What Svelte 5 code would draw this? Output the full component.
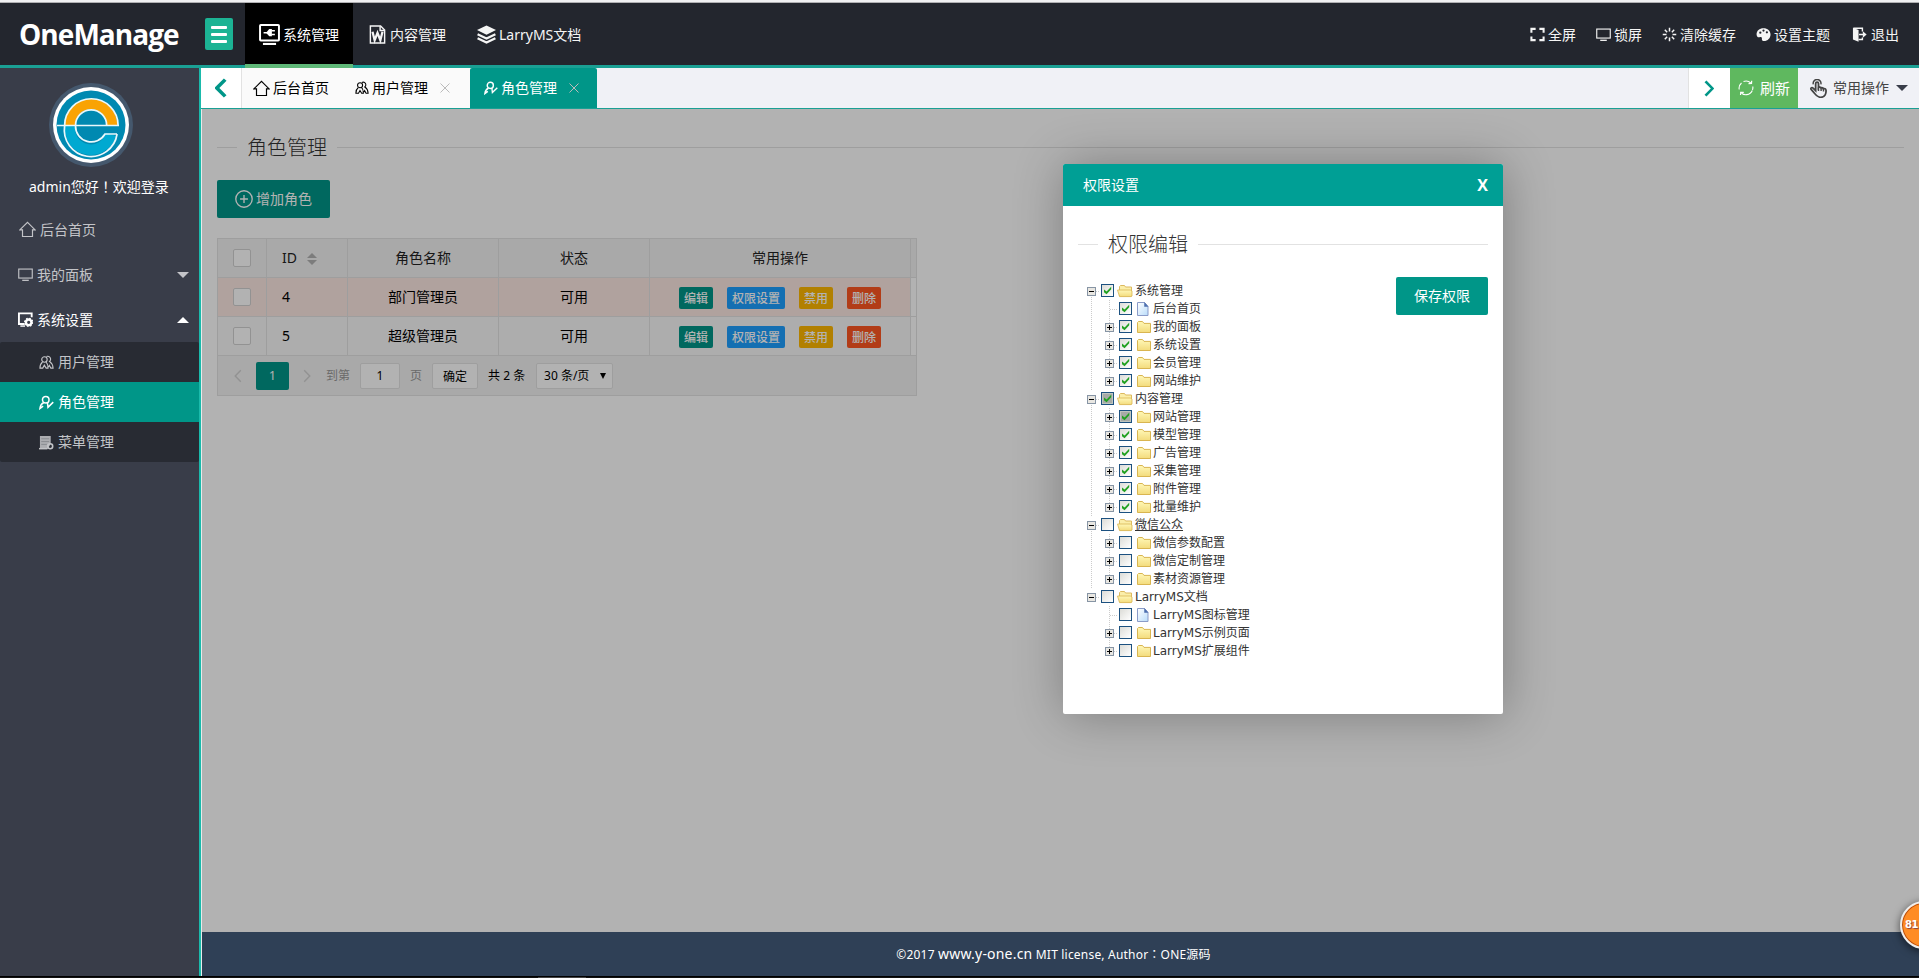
<script>
  const topNav = [
    { icon: 'plug', label: '系统管理', active: true },
    { icon: 'word', label: '内容管理' },
    { icon: 'layers', label: 'LarryMS文档' }
  ];
  const tools = [
    { icon: 'full', label: '全屏' },
    { icon: 'monitor', label: '锁屏' },
    { icon: 'burst', label: '清除缓存' },
    { icon: 'palette', label: '设置主题' },
    { icon: 'exit', label: '退出' }
  ];
  const subMenu = [
    { icon: 'users', label: '用户管理' },
    { icon: 'role', label: '角色管理', active: true },
    { icon: 'menu', label: '菜单管理' }
  ];
  const rows = [
    { id: 4, name: '部门管理员', state: '可用', hover: true },
    { id: 5, name: '超级管理员', state: '可用' }
  ];
  const tree = [
    { label: '系统管理', check: 'on', children: [
      { label: '后台首页', check: 'on', leaf: true },
      { label: '我的面板', check: 'on' },
      { label: '系统设置', check: 'on' },
      { label: '会员管理', check: 'on' },
      { label: '网站维护', check: 'on' }
    ] },
    { label: '内容管理', check: 'part', children: [
      { label: '网站管理', check: 'part' },
      { label: '模型管理', check: 'on' },
      { label: '广告管理', check: 'on' },
      { label: '采集管理', check: 'on' },
      { label: '附件管理', check: 'on' },
      { label: '批量维护', check: 'on' }
    ] },
    { label: '微信公众', check: 'off', underline: true, children: [
      { label: '微信参数配置', check: 'off' },
      { label: '微信定制管理', check: 'off' },
      { label: '素材资源管理', check: 'off' }
    ] },
    { label: 'LarryMS文档', check: 'off', children: [
      { label: 'LarryMS图标管理', check: 'off', leaf: true },
      { label: 'LarryMS示例页面', check: 'off' },
      { label: 'LarryMS扩展组件', check: 'off' }
    ] }
  ];
</script>

{#snippet icon(name, size = 16)}
  <svg class="icon" width={size} height={size} viewBox="0 0 16 16" fill="none" stroke="currentColor" stroke-width="1.2">
    {#if name === 'plug'}
      <rect x=".8" y=".8" width="14.4" height="11.8" rx=".6" stroke-width="1.5" />
      <path d="M3 15.2h10" stroke-width="1.6" />
      <path d="M3.500 6.600h3M9.500 5.200h2.600M9.500 8h2.600" />
      <path d="M9.800 3.800v5.600H7.800L5.400 6.600l2.400-2.800z" fill="currentColor" stroke="none" />
    {:else if name === 'word'}
      <path d="M2 .8h8.600L14 4.200v11H2z" />
      <path d="M10.200 1v3.600H14" />
      <path d="M3.800 5.600l1.800 7.200L8 6.600l2.400 6.200 1.800-7.200" stroke-width="1.900" />
    {:else if name === 'layers'}
      <path d="M8 .4l8 3.900-8 3.900-8-3.900z" fill="currentColor" stroke="none" />
      <path d="M.5 7.800L8 11.400l7.500-3.600M.5 11.200L8 14.800l7.500-3.600" stroke-width="1.900" />
    {:else if name === 'full'}
      <path d="M1.500 6V2H6M10 2h4.500V6M14.500 10v4H10M6 14H1.500v-4" stroke-width="2.200" />
    {:else if name === 'monitor'}
      <rect x=".8" y="2.200" width="14.400" height="9.600" />
      <path d="M4.500 14.200h7" stroke-width="1.400" />
    {:else if name === 'burst'}
      <path d="M8 .8v4M8 11.200v4M.8 8h4M11.200 8h4M3 3l2.500 2.500M10.500 10.500L13 13M13 3l-2.500 2.500M5.500 10.500L3 13" stroke-width="1.600" />
    {:else if name === 'palette'}
      <path fill-rule="evenodd" d="M8 1.200C3.600 1.200.6 4 .6 7.600c0 2.600 1.500 3.600 3.200 3.200 1.700-.4 2.700.1 2.500 1.900-.2 1.600.8 2.200 2.200 2.200 4 0 7-3.200 7-7C15.500 4 12.400 1.200 8 1.200zM3.400 6a1.200 1.200 0 1 0 2.400 0 1.200 1.200 0 0 0-2.400 0zM6.800 3.800a1.200 1.200 0 1 0 2.400 0 1.200 1.200 0 0 0-2.400 0zM10.400 5.600a1.200 1.200 0 1 0 2.400 0 1.200 1.200 0 0 0-2.400 0z" fill="currentColor" stroke="none" />
    {:else if name === 'exit'}
      <path d="M1 .8l6 2.400v12.400l-6-2.200z" fill="currentColor" stroke="none" />
      <path d="M1.500 1.300h9.600v3.500M11.100 11.200v2.200H7M7.500 8h5" stroke-width="1.500" />
      <path d="M11.500 4.600L15.600 8l-4.100 3.400z" fill="currentColor" stroke="none" />
    {:else if name === 'home'}
      <path d="M.8 8.400L8 1.300l7.200 7.100H12.700v6.200H3.300V8.400z" stroke-width="1.100" />
    {:else if name === 'users'}
      <circle cx="5.800" cy="4.800" r="2.900" /><path d="M8 1.600a3 3 0 1 1 2.600 5.600M3.800 7.400C1.800 9 1 11 1 14h3l1.700-3.200L7.600 14h2c0-3-.4-5-2.200-6.600M11.600 7.200c2.200 1.400 3.200 3.600 3.400 6.800h-2.400l-1.600-3-1 1.800" />
    {:else if name === 'role'}
      <circle cx="7.200" cy="5" r="3.500" stroke-width="1.600" />
      <path d="M5.200 8C2.600 9.300 1.400 11 1 14.400l3.400-2.600M9 8l.6 5.200L15.200 7.600" stroke-width="1.600" />
    {:else if name === 'setting'}
      <path d="M7 12.800H1V1.500h13.600v4" stroke-width="2" />
      <path d="M2.500 15h5" stroke-width="1.500" />
      <circle cx="11.400" cy="11" r="3" stroke-width="2.600" />
      <circle cx="11.400" cy="11" r="4.300" stroke-width="1.400" stroke-dasharray="1.700 1.680" />
    {:else if name === 'menu'}
      <path d="M1 1h11.500v8.500L9 15H1z" fill="currentColor" stroke="none" opacity=".85" />
      <path d="M2.400 4h8.400M2.400 7h8.400M2.400 10h6" stroke="#777a80" stroke-width=".7" />
      <circle cx="12" cy="12" r="2.600" stroke-width="1.700" />
      <path d="M0 14.600h9" stroke-width="1.600" />
    {:else if name === 'add'}
      <circle cx="8" cy="8" r="7.300" /><path d="M4.500 8h7M8 4.500v7" />
    {:else if name === 'refresh'}
      <path d="M14.300 10.500A7 7 0 0 1 2.500 12.200M1.200 9.500A7 7 0 0 1 3.500 3M5.500 1.600A7 7 0 0 1 12.800 3M14.800 6.500a7 7 0 0 1-.3 3.400" stroke-width="1.100" />
      <path d="M10.500 3.600l3-.2.200-2.600M5.800 12.300l-3 .1-.3 2.600" />
    {:else if name === 'hand'}
      <path d="M5.600 9.800V3.900c0-1.700 2.400-1.700 2.400 0v3.300c.5-.7 1.900-.5 2.200.3.600-.4 1.700-.1 1.900.7 1-.4 2 .1 2.200 1.200.3 2.600-.6 6-4.500 6-3 0-4-1.800-6-4.400L1.700 8.600c-.5-1.200.9-1.800 1.700-1z" stroke-width="1.500" />
      <path d="M3.600 4.500a3.300 3.300 0 1 1 6.400 0M8 7v3M10.200 7.800v2.400M12.200 8.500v2" stroke-width="1.200" />
    {/if}
  </svg>
{/snippet}

{#snippet chevron(right, w, h, sw)}
  <svg width={w} height={h} viewBox="0 0 10 18" fill="none" stroke="currentColor" stroke-width={sw} preserveAspectRatio="none">
    <path d={right ? 'M1.500 1.500L8.500 9l-7 7.500' : 'M8.500 1.500L1.500 9l7 7.500'} />
  </svg>
{/snippet}

{#snippet node(n, root)}
  <div class="node" class:root>
    <span class="switch" class:leaf={n.leaf}>
      {#if !n.leaf}
        <svg width="9" height="9" viewBox="0 0 9 9" shape-rendering="crispEdges">
          <rect x=".5" y=".5" width="8" height="8" fill="#e9e7e2" stroke="#8795a5" />
          <path d={root ? 'M2 4.500h5' : 'M2 4.500h5M4.500 2v5'} stroke="#000" />
        </svg>
      {/if}
    </span>
    <span class="check {n.check}">
      {#if n.check !== 'off'}
        <svg width="13" height="13" viewBox="0 0 13 13"><path d="M3 5.400v2.800L5.600 10.300 10.200 5.300V2.800L5.600 7.400z" fill="#21a121" /></svg>
      {/if}
    </span>
    {#if n.leaf}
      <svg class="pic" width="16" height="16" viewBox="0 0 16 16">
        <path d="M1.500 1.500h7l3.500 4v9H1.500z" fill="url(#paper)" stroke="#8a9bc8" />
        <path d="M8.500 1.500V5.500H12z" fill="#4c6fae" stroke="#4c6fae" stroke-width=".5" />
      </svg>
    {:else if root}
      <svg class="pic" width="16" height="16" viewBox="0 0 16 16">
        <path d="M2.500 13V3.500l1-1h4l1 1.500H14.500V13z" fill="#fbeea9" stroke="#dcb95f" />
        <path d="M.5 7h12.800l1.700 1v5l-1 .6H2.500z" fill="url(#folder)" stroke="#d9b550" stroke-width=".8" />
      </svg>
    {:else}
      <svg class="pic" width="16" height="16" viewBox="0 0 16 16">
        <path d="M1.500 13.500v-10l1-1h4l1.500 1.900h6.500v9.100z" fill="url(#folder)" stroke="#d9b550" />
      </svg>
    {/if}
    <span class="name" class:underline={n.underline}>{n.label}</span>
  </div>
{/snippet}

<svg class="defs" width="0" height="0">
  <defs>
    <linearGradient id="folder" x1="0" y1="0" x2="0" y2="1"><stop offset="0" stop-color="#fff8b8" /><stop offset="1" stop-color="#f3db7c" /></linearGradient>
    <linearGradient id="paper" x1="0" y1="0" x2="1" y2="1"><stop offset="0" stop-color="#fff" /><stop offset="1" stop-color="#b9dcfa" /></linearGradient>
  </defs>
</svg>

<div class="page">
  <div class="edge"></div>
  <header>
    <div class="brand">OneManage</div>
    <div class="burger"><i></i><i></i><i></i></div>
    <nav>
      {#each topNav as n}
        <div class="nav-item" class:active={n.active}>{@render icon(n.icon, n.active ? 21 : 19)}<span>{n.label}</span></div>
      {/each}
    </nav>
    <div class="tools">
      {#each tools as t}
        <div class="tool">{@render icon(t.icon, 15)}<span>{t.label}</span></div>
      {/each}
    </div>
  </header>

  <div class="body">
    <aside>
      <svg class="avatar" width="84" height="84" viewBox="0 0 84 84" fill="none">
        <circle cx="42" cy="42" r="42" fill="#45586d" />
        <circle cx="42" cy="42" r="38" fill="#fff" />
        <circle cx="42" cy="42" r="34.500" fill="#0089b1" />
        <path d="M21 42a21 21 0 0 1 42 0" stroke="#f9a303" stroke-width="10.500" />
        <path d="M21 43a21 21 0 0 0 41 8.500" stroke="#00a9d1" stroke-width="10.500" />
        <path d="M8 42.500h62M15.600 42.500a26.500 26.500 0 0 1 53.500 0M26.500 42.500a15.600 15.600 0 0 1 31.200 0M15.600 43a26.500 26.500 0 0 0 52.500 8M26.500 43a15.800 15.800 0 0 0 29.500 8h12" stroke="#e9f8fc" stroke-width="1.700" />
      </svg>
      <div class="hello">admin您好！欢迎登录</div>
      <div class="item home">{@render icon('home', 17)}<span>后台首页</span></div>
      <div class="item">{@render icon('monitor', 15)}<span>我的面板</span><i class="down"></i></div>
      <div class="item open">{@render icon('setting', 15)}<span>系统设置</span><i class="up"></i></div>
      <div class="sub">
        {#each subMenu as s}
          <div class="sub-item" class:active={s.active}>{@render icon(s.icon, 15)}<span>{s.label}</span></div>
        {/each}
      </div>
    </aside>

    <main>
      <div class="tabs">
        <div class="arrow left">{@render chevron(false, 12, 20, 3)}</div>
        <div class="tab first">{@render icon('home', 17)}<span>后台首页</span></div>
        <div class="tab second">{@render icon('users', 14)}<span>用户管理</span><svg class="x" viewBox="0 0 10 10"><path d="M.5.5l9 9M9.500.5l-9 9" /></svg></div>
        <div class="tab current">{@render icon('role', 14)}<span>角色管理</span><svg class="x" viewBox="0 0 10 10"><path d="M.5.5l9 9M9.500.5l-9 9" /></svg></div>
        <div class="arrow right">{@render chevron(true, 10, 17, 2.700)}</div>
        <div class="refresh">{@render icon('refresh', 16)}<span>刷新</span></div>
        <div class="common">{@render icon('hand', 19)}<span>常用操作</span><i></i></div>
      </div>

      <section class="content">
        <div class="legend"><span>角色管理</span></div>
        <button class="add">{@render icon('add', 18)}<span>增加角色</span></button>

        <div class="table">
          <div class="tr head">
            <div class="td c"><i class="box"></i></div>
            <div class="td id"><span class="txt">ID</span><span class="sort"><i class="up"></i><i class="down"></i></span></div>
            <div class="td c"><span class="txt">角色名称</span></div>
            <div class="td c"><span class="txt">状态</span></div>
            <div class="td c"><span class="txt">常用操作</span></div>
            <div class="td last"></div>
          </div>
          {#each rows as r}
            <div class="tr" class:hover={r.hover}>
              <div class="td c"><i class="box"></i></div>
              <div class="td id"><span class="txt">{r.id}</span></div>
              <div class="td c"><span class="txt">{r.name}</span></div>
              <div class="td c"><span class="txt">{r.state}</span></div>
              <div class="td c ops">
                <b class="teal">编辑</b><b class="blue">权限设置</b><b class="amber">禁用</b><b class="red">删除</b>
              </div>
              <div class="td last blank"></div>
            </div>
          {/each}
          <div class="pager">
            <span class="pg prev">{@render chevron(false, 8, 14, 1.800)}</span>
            <span class="cur">1</span>
            <span class="pg next">{@render chevron(true, 8, 14, 1.800)}</span>
            <span class="dim">到第</span>
            <span class="field num">1</span>
            <span class="dim">页</span>
            <span class="field ok">确定</span>
            <span class="count">共 2 条</span>
            <span class="field sel">30 条/页<i></i></span>
          </div>
        </div>
        <div class="shade"></div>
      </section>

      <footer><span>©2017 <em>www.y-one.cn</em> MIT license, Author：ONE源码</span></footer>
    </main>
  </div>
  <div class="taskbar"><i></i></div>

  <div class="modal">
    <div class="title"><span>权限设置</span><b>X</b></div>
    <div class="inner">
      <div class="legend light"><span>权限编辑</span></div>
      <div class="cols">
        <div class="tree">
          {#each tree as n}
            <div class="branch">
              {@render node(n, true)}
              <div class="kids">
                {#each n.children as k}{@render node(k, false)}{/each}
              </div>
            </div>
          {/each}
        </div>
        <button class="save">保存权限</button>
      </div>
    </div>
  </div>

  <div class="badge">81</div>
</div>

<style>
  :global(body) { margin: 0; overflow: hidden; }
  .page, .page * { box-sizing: border-box; }
  .page { position: relative; width: 1919px; height: 978px; display: flex; flex-direction: column; overflow: hidden; font: 14px/20px "Noto Sans", "Noto Sans CJK SC", sans-serif; color: #333; }
  .defs { position: absolute; }
  i, em { font-style: normal; }
  svg { display: block; flex: none; }
  button { border: 0; font: inherit; }
  span { white-space: nowrap; }

  .edge { height: 3px; background: #f0f0f2; border-bottom: 1px solid #b0b0b3; flex: none; }
  header { height: 65px; flex: none; display: flex; background: #23262e; border-bottom: 3px solid #1aa094; color: #fff; }
  .brand { width: 205px; padding: 10px 0 0 19px; font: bold 28px/42px "Open Sans", sans-serif; letter-spacing: -.95px; }
  .burger { width: 28px; height: 32px; margin: 15px 12px 0 0; border-radius: 2px; background: #1cb394; display: flex; flex-direction: column; gap: 4px; padding: 8px 6px; }
  .burger i { height: 3px; background: #fff; border-radius: 1px; flex: none; }
  nav { display: flex; }
  .nav-item { height: 65px; padding: 0 16px 2px 15px; display: flex; align-items: center; gap: 3px; color: #f5f5f5; }
  .nav-item.active { width: 108px; padding: 2px 0 0 14px; gap: 3px; background: #000; border-bottom: 4px solid #5fb878; color: #fff; }
  .nav-item:nth-child(2) { width: 109px; }
  .tools { margin-left: auto; display: flex; gap: 20px; padding: 0 20px 0 0; height: 63px; align-items: center; color: #f5f5f5; }
  .tool { display: flex; align-items: center; gap: 3px; }
  .tool:last-child { margin-left: 2px; gap: 4px; }

  .body { display: flex; flex: none; height: 908px; }
  aside { width: 201px; background: #393d49; border-right: 2px solid #1abaab; display: flex; flex-direction: column; color: #c3c4c8; }
  .avatar { margin: 15px 0 0 49px; }
  .hello { margin: 10px 0 10px 29px; color: #fff; white-space: nowrap; font-family: "Noto Sans", "Noto Sans CJK TC", sans-serif; }
  .item { height: 45px; display: flex; align-items: center; padding: 0 10px 0 18px; gap: 4px; }
  .item.home { padding-left: 19px; gap: 4px; }
  .item.open { color: #fff; }
  .item i { margin-left: auto; border: 6px solid transparent; }
  .item .down { border-top-color: #c3c4c8; border-bottom: 0; }
  .item .up { border-bottom-color: #fff; border-top: 0; }
  .sub { background: #282b33; border-radius: 2px; }
  .sub-item { height: 40px; display: flex; align-items: center; gap: 4px; padding-left: 39px; }
  .sub-item.active { background: #009688; color: #fff; }

  main { flex: 1; display: flex; flex-direction: column; border-left: 1px solid #e8eaea; }
  .tabs { height: 41px; flex: none; margin-left: -1px; display: flex; background: #f0f1f6; border-bottom: 1px solid #1aa094; color: #000; }
  .tabs > div { display: flex; align-items: center; }
  .arrow { background: #fff; color: #009688; justify-content: center; }
  .arrow.left { width: 41px; border-right: 1px solid #e2e2e2; }
  .arrow.right { width: 42px; padding-right: 2px; margin-left: auto; border-left: 1px solid #e2e2e2; }
  .tab { background: #fafafa; gap: 3px; }
  .tab.first { width: 101px; padding-left: 11px; }
  .tab.second { width: 127px; padding-left: 12px; }
  .tab.current { width: 127px; padding-left: 14px; background: #009688; color: #fff; border-radius: 2px 2px 0 0; }
  .x { width: 10px; height: 10px; margin-left: 9px; stroke: #bbb; fill: none; stroke-width: 1; }
  .refresh { width: 68px; background: #5fb85f; color: #fff; padding-left: 8px; gap: 6px; font-size: 15px; }
  .common { width: 121px; padding-left: 11px; gap: 5px; color: #444; }
  .common i { border: 6px solid transparent; border-top-color: #393d49; border-bottom: 0; margin-left: 2px; }

  .content { position: relative; height: 823px; flex: none; background: #fff; padding: 23px 15px 0; }
  .shade { position: absolute; inset: 0; background: rgba(0, 0, 0, .3); }
  .legend { display: flex; align-items: center; gap: 10px; height: 30px; font: 300 20px/30px "Noto Sans CJK SC", sans-serif; }
  .legend::before, .legend::after { content: ""; height: 1px; background: #e2e2e2; }
  .legend::before { width: 20px; }
  .legend::after { flex: 1; }
  .add { width: 113px; height: 38px; margin-top: 18px; padding: 0 0 0 18px; display: flex; align-items: center; gap: 3px; background: #009688; color: #fff; border-radius: 2px; }
  .table { width: 700px; margin-top: 20px; border: 1px solid #e2e2e2; color: #000; }
  .tr { display: grid; grid-template-columns: 49px 81px 151px 151px 261px 5px; height: 39px; border-bottom: 1px solid #e2e2e2; background: #f8f8f8; }
  .tr.head { background: #f2f2f2; color: #222; }
  .tr.hover { background: #fde9e3; }
  .td { border-right: 1px solid #e2e2e2; display: flex; align-items: center; height: 38px; }
  .td.last { border: 0; }
  .txt { padding-bottom: 1px; }
  .blank { background: #fff; }
  .td.c { justify-content: center; }
  .td.id { padding-left: 15px; }
  .box { width: 18px; height: 18px; border: 1px solid #d2d2d2; border-radius: 2px; background: #fff; }
  .sort { display: flex; flex-direction: column; gap: 2px; margin: 2px 0 0 10px; }
  .sort i { border: 5px solid transparent; }
  .sort .up { border-top: 0; border-bottom-color: #b2b2b2; }
  .sort .down { border-bottom: 0; border-top-color: #b2b2b2; }
  .ops { gap: 14px; padding-top: 2px; }
  .ops b { font: 500 12px/22px "Noto Sans CJK SC", sans-serif; color: #fff; padding: 0 5px; border-radius: 2px; height: 22px; }
  .teal { background: #009688; } .blue { background: #1e9fff; } .amber { background: #ffb800; } .red { background: #ff5722; }
  .pager { height: 39px; background: #f2f2f2; display: flex; align-items: center; font-size: 12px; padding-left: 16px; }
  .pg { color: #d2d2d2; width: 8px; }
  .cur { width: 33px; height: 28px; margin: 0 14px; background: #009688; color: #fff; border-radius: 2px; text-align: center; line-height: 28px; }
  .next { margin-right: 15px; }
  .dim { color: #999; }
  .field { height: 26px; line-height: 24px; border: 1px solid #e2e2e2; border-radius: 2px; background: #fff; text-align: center; }
  .num { width: 40px; margin: 0 10px; }
  .ok { width: 46px; margin: 0 10px; line-height: 26px; }
  .count { width: 38px; margin-right: 10px; }
  .sel { width: 77px; display: flex; align-items: center; justify-content: space-between; padding: 0 6px 0 7px; }
  .sel i { border: 3px solid transparent; border-top: 6px solid #000; border-bottom: 0; }

  footer { height: 44px; background: #2f4056; color: #fff; display: flex; align-items: center; justify-content: center; padding-right: 14px; font-family: "Noto Sans", "Noto Sans CJK TC", sans-serif; font-size: 12px; letter-spacing: .2px; }
  footer em { font-size: 14px; }
  .taskbar { height: 2px; background: #111; border-top: 1px solid #000; }
  .taskbar i { display: block; width: 48px; height: 1px; margin-left: 538px; background: #444; }

  .modal { position: absolute; left: 1063px; top: 164px; width: 440px; height: 550px; background: #fff; border-radius: 2px; box-shadow: 1px 1px 50px rgba(0, 0, 0, .3); }
  .title { height: 42px; background: #009f95; color: #fff; border-radius: 2px 2px 0 0; display: flex; align-items: center; justify-content: space-between; padding: 0 15px 0 20px; }
  .title b { font: bold 16px/20px "Open Sans", sans-serif; margin-top: -1px; }
  .inner { padding: 23px 15px 0; }
  .cols { display: flex; justify-content: space-between; align-items: flex-start; padding-top: 18px; }
  .save { width: 92px; height: 38px; background: #009688; color: #fff; border-radius: 2px; padding: 0; }
  .tree { margin: 5px 0 0 6px; font: 12px/18px "DejaVu Sans", "Noto Sans CJK SC", sans-serif; }
  .branch { background: repeating-linear-gradient(#ccc 0 1px, transparent 1px 2px) 7px 9px / 1px 100% no-repeat; }
  .branch:last-child { background: none; }
  .kids { padding-left: 18px; }
  .node { height: 18px; display: flex; align-items: center; background: repeating-linear-gradient(#ccc 0 1px, transparent 1px 2px) 7px 0 / 1px 100% no-repeat; }
  .node.root, .node:last-child { background: none; }
  .switch { width: 16px; height: 18px; padding: 5px 0 0 3px; background: repeating-linear-gradient(90deg, #ccc 0 1px, transparent 1px 2px) 8px 9px / 8px 1px no-repeat; }
  .node:last-child .switch { background: repeating-linear-gradient(90deg, #ccc 0 1px, transparent 1px 2px) 8px 9px / 8px 1px no-repeat, repeating-linear-gradient(#ccc 0 1px, transparent 1px 2px) 7px 0 / 1px 9px no-repeat; }
  .check { width: 13px; height: 13px; margin: -1px 4px 0 1px; border: 1px solid #1c5180; background: linear-gradient(135deg, #dcdcd7, #fff); }
  .check svg { margin: -1px; }
  .check.part { background: #a6aaa6; box-shadow: inset 0 0 0 1px #bfc5bf; }
  .pic { margin-right: 1px; }
  .root .pic { margin: 0 2px 0 -1px; }
  .underline { text-decoration: underline; }

  .badge { position: absolute; left: 1900px; top: 901px; width: 48px; height: 48px; border-radius: 50%; border: 2px solid #eee; background: #ff8c24; box-shadow: inset 0 0 0 1px #b84d10, 0 2px 8px rgba(0, 0, 0, .6); color: #fff; font: bold 10px/43px "DejaVu Sans", sans-serif; letter-spacing: -.4px; padding-left: 3px; text-shadow: 1px 1px 1px #844; }
</style>
